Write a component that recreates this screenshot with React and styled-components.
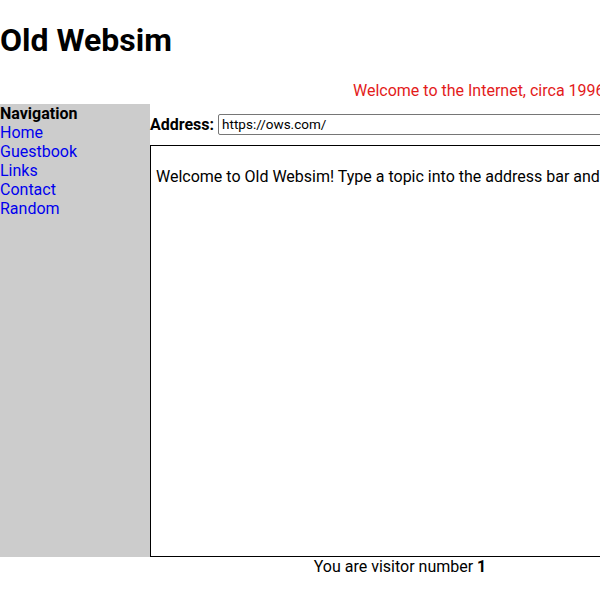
import React from "react";
import styled, { createGlobalStyle } from "styled-components";

const Global = createGlobalStyle`
  html, body { margin: 0; padding: 0; overflow: hidden; background: #fff; }
  body { font-family: Roboto, "Liberation Sans", sans-serif; font-size: 16px; color: #000; }
`;

const Page = styled.div`
  width: 800px;
`;

const Title = styled.h1`
  font-size: 32px;
  font-weight: 700;
  margin: 21.44px 0;
  line-height: normal;
`;

const Tagline = styled.div`
  color: #e31b1b;
  padding-left: 353px;
  margin-bottom: 4px;
  white-space: nowrap;
`;

const Layout = styled.div`
  display: grid;
  grid-template-columns: 150px 650px;
`;

const Nav = styled.nav`
  background: #cccccc;
  display: flex;
  flex-direction: column;
`;

const NavHeading = styled.div`
  font-weight: 700;
`;

const NavLink = styled.a`
  color: #0000ee;
  text-decoration: none;
`;

const Main = styled.main`
  display: flex;
  flex-direction: column;
`;

const AddressBar = styled.div`
  display: flex;
  align-items: center;
  gap: 4px;
  padding-top: 10px;
  height: 31px;
  box-sizing: border-box;
`;

const Label = styled.label`
  font-weight: 700;
`;

const AddressInput = styled.input`
  flex: 1;
  margin-right: 5px;
  font-family: Roboto, "Liberation Sans", sans-serif;
  font-size: 13.5px;
  padding: 1px 3px;
  height: 21px;
  box-sizing: border-box;
  border: 1px solid #767676;
  border-radius: 2px;
  color: #000;
`;

const Viewer = styled.div`
  margin-top: 10px;
  border: 1px solid #000;
  padding: 21px 5px 19px;
  box-sizing: content-box;
  height: 370px;
`;

const Footer = styled.div`
  text-align: center;
`;

export default function App() {
  return (
    <>
      <Global />
      <Page>
        <Title>Old Websim</Title>
        <Tagline>Welcome to the Internet, circa 1996</Tagline>
        <Layout>
          <Nav>
            <NavHeading>Navigation</NavHeading>
            <NavLink href="#">Home</NavLink>
            <NavLink href="#">Guestbook</NavLink>
            <NavLink href="#">Links</NavLink>
            <NavLink href="#">Contact</NavLink>
            <NavLink href="#">Random</NavLink>
          </Nav>
          <Main>
            <AddressBar>
              <Label htmlFor="addr">Address:</Label>
              <AddressInput id="addr" defaultValue="https://ows.com/" />
            </AddressBar>
            <Viewer>
              Welcome to Old Websim! Type a topic into the address bar and press Enter.
            </Viewer>
          </Main>
        </Layout>
        <Footer>
          You are visitor number <b>1</b>
        </Footer>
      </Page>
    </>
  );
}
